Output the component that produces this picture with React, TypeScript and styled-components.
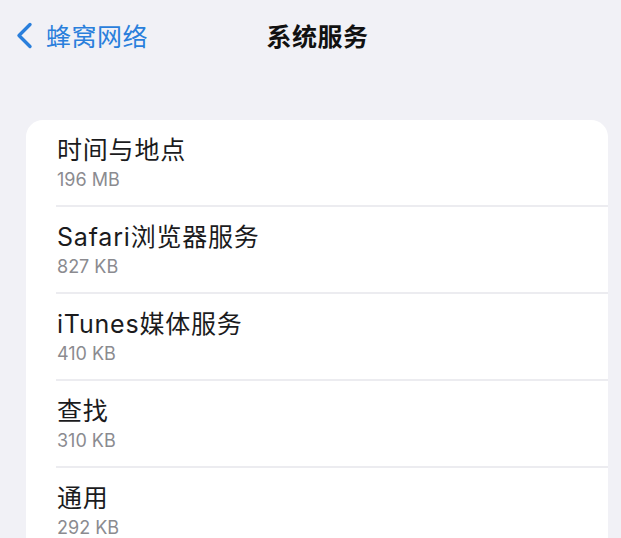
import styled, { createGlobalStyle } from "styled-components";

const GlobalStyle = createGlobalStyle`
  html, body {
    margin: 0;
    padding: 0;
    background-color: #f1f1f6;
    font-family: "Inter", "Noto Sans CJK SC", sans-serif;
    -webkit-font-smoothing: antialiased;
  }
`;

const Page = styled.div`
  height: 538px;
  overflow: hidden;
  display: flex;
  flex-direction: column;
`;

const NavBar = styled.header`
  flex-shrink: 0;
  height: 70px;
  display: grid;
  grid-template-columns: 1fr auto 1fr;
  align-items: center;
  padding-left: 14px;
  margin-bottom: 50px;
`;

const BackBtn = styled.div`
  display: flex;
  align-items: center;
  gap: 12px;
  margin-left: -14px;
  padding-left: 15px;
  color: #2a7fdc;
  font-size: 25px;
  letter-spacing: 0.5px;
`;

const NavTitle = styled.div`
  font-size: 25px;
  font-weight: 600;
  color: #111;
  letter-spacing: 0.5px;
`;

const Card = styled.ul`
  flex-shrink: 0;
  list-style: none;
  margin: 0 13px 0 26px;
  padding: 0;
  background-color: #fff;
  border-radius: 17px 17px 0 0;
`;

const Row = styled.li`
  height: 87px;
  box-sizing: border-box;
  padding: 15px 0 0 31px;
  position: relative;
  &:not(:last-child)::after {
    content: "";
    position: absolute;
    left: 30px;
    right: 0;
    bottom: 0;
    height: 2px;
    background-color: #ececf0;
  }
`;

const Name = styled.div`
  font-size: 25px;
  line-height: 30px;
  color: #1b1b1d;
  letter-spacing: 0.8px;
`;

const Size = styled.div`
  font-size: 18px;
  line-height: 22px;
  margin-top: 4px;
  color: #8b8b90;
`;

const Chevron = () => (
  <svg width="19" height="27" viewBox="0 0 19 27">
    <path
      d="M15 2.5 L4 13.5 L15 24.5"
      fill="none"
      stroke="currentColor"
      strokeWidth="3.4"
      strokeLinecap="round"
      strokeLinejoin="round"
    />
  </svg>
);

const services = [
  { name: "时间与地点", size: "196 MB" },
  { name: "Safari浏览器服务", size: "827 KB" },
  { name: "iTunes媒体服务", size: "410 KB" },
  { name: "查找", size: "310 KB" },
  { name: "通用", size: "292 KB" },
];

export default function App() {
  return (
    <Page>
      <GlobalStyle />
      <NavBar>
        <BackBtn>
          <Chevron />
          <span>蜂窝网络</span>
        </BackBtn>
        <NavTitle>系统服务</NavTitle>
        <div />
      </NavBar>
      <Card>
        {services.map(s => (
          <Row key={s.name}>
            <Name>{s.name}</Name>
            <Size>{s.size}</Size>
          </Row>
        ))}
      </Card>
    </Page>
  );
}
